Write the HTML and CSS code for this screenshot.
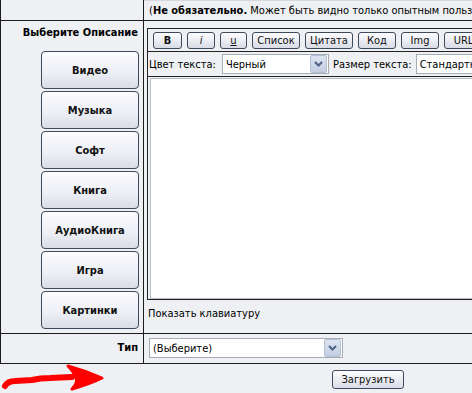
FILE: index.html
```html
<!DOCTYPE html>
<html lang="ru">

<head>
    <meta charset="UTF-8">
    <title>Загрузка</title>
    <link rel="stylesheet" href="styles.css">
</head>

<body>
    <div class="upload-form">
        <!-- row: note -->
        <div class="cell label-cell note-label"></div>
        <div class="cell field-cell note">(<b>Не обязательно.</b> Может быть видно только опытным пользователям)</div>

        <!-- row: description -->
        <div class="cell label-cell desc-cell">
            <div class="label">Выберите Описание</div>
            <div class="templates">
                <button class="tpl-button">Видео</button>
                <button class="tpl-button">Музыка</button>
                <button class="tpl-button">Софт</button>
                <button class="tpl-button">Книга</button>
                <button class="tpl-button">АудиоКнига</button>
                <button class="tpl-button">Игра</button>
                <button class="tpl-button">Картинки</button>
            </div>
        </div>
        <div class="cell field-cell editor-cell">
            <div class="editor">
                <div class="toolbar">
                    <button class="tb-button b">B</button>
                    <button class="tb-button i">i</button>
                    <button class="tb-button u">u</button>
                    <button class="tb-button w49">Список</button>
                    <button class="tb-button w48">Цитата</button>
                    <button class="tb-button w38">Код</button>
                    <button class="tb-button w38">Img</button>
                    <button class="tb-button w39">URL</button>
                </div>
                <div class="format-row">
                    <span>Цвет текста:</span>
                    <div class="select color-select"><span class="select-text">Черный</span><span class="select-arrow"><svg width="9" height="6" viewBox="0 0 9 6"><path d="M1 1 L4.5 4.5 L8 1" fill="none" stroke="#4d6185" stroke-width="2"/></svg></span></div>
                    <span>Размер текста:</span>
                    <div class="select size-select"><span class="select-text">Стандартный</span><span class="select-arrow"><svg width="9" height="6" viewBox="0 0 9 6"><path d="M1 1 L4.5 4.5 L8 1" fill="none" stroke="#4d6185" stroke-width="2"/></svg></span></div>
                </div>
                <div class="text-area"></div>
            </div>
            <div class="keyboard-link">Показать клавиатуру</div>
        </div>

        <!-- row: type -->
        <div class="cell label-cell type-cell"><div class="label">Тип</div></div>
        <div class="cell field-cell type-field">
            <div class="select type-select"><span class="select-text">(Выберите)</span><span class="select-arrow"><svg width="9" height="6" viewBox="0 0 9 6"><path d="M1 1 L4.5 4.5 L8 1" fill="none" stroke="#4d6185" stroke-width="2"/></svg></span></div>
        </div>

        <!-- row: submit -->
        <div class="bottom-left">
            <svg class="arrow" width="110" height="29" viewBox="0 0 110 29">
                <path d="M5 22 Q8 17 15 17 L32 16 Q40 14 50 14 L72 13" fill="none" stroke="#f00" stroke-width="6" stroke-linecap="round" stroke-linejoin="round"/>
                <path d="M68 2 Q86 7 102 14 Q90 20 72 25 Q78 19 76 14 Q74 8 68 2 Z" fill="#f00" stroke="#f00" stroke-width="3" stroke-linejoin="round"/>
            </svg>
        </div>
        <div class="bottom-right">
            <button class="submit-button">Загрузить</button>
        </div>
    </div>
</body>

</html>
```

FILE: styles.css
```css
body {
    margin: 0;
    background-color: #eef0f3;
    font-family: "DejaVu Sans Condensed", Tahoma, "DejaVu Sans", sans-serif;
    font-size: 11px;
    color: #000;
    overflow: hidden;
}

.upload-form {
    display: grid;
    grid-template-columns: 144px 1fr;
    width: 472px;
    overflow: hidden;
}

.cell {
    border-bottom: 1px solid #1c1c1c;
}

.label-cell {
    border-left: 1px solid #1c1c1c;
    border-right: 1px solid #1c1c1c;
    text-align: right;
}

.label {
    font-weight: bold;
    padding-right: 5px;
    line-height: 14px;
}

.note-label {
    height: 21px;
    box-sizing: border-box;
}

.note {
    height: 21px;
    box-sizing: border-box;
    line-height: 20px;
    padding-left: 5px;
    white-space: nowrap;
    border-top: 1px solid #d6d8dc;
}

/* description */
.desc-cell {
    padding: 5px 0 4px;
}

.templates {
    display: flex;
    flex-direction: column;
    align-items: flex-end;
    gap: 2px;
    margin-top: 11px;
    padding-right: 4px;
}

.tpl-button {
    width: 98px;
    height: 38px;
    border: 1px solid #3d4a5c;
    border-radius: 4px;
    background: linear-gradient(#fdfdff, #eceef4 60%, #d9dce6);
    font-family: inherit;
    font-size: 11px;
    font-weight: bold;
    color: #111;
    padding: 0;
}

.editor-cell {
    padding: 7px 0 0 3px;
    overflow: hidden;
}

.editor {
    width: 520px;
    border-top: 1px solid #222;
    border-left: 1px solid #222;
    border-bottom: 1px solid #222;
}

.toolbar {
    display: flex;
    gap: 5px;
    height: 23px;
    padding: 3px 0 0 5px;
    box-sizing: border-box;
    border-bottom: 1px solid #222;
}

.tb-button {
    height: 17px;
    padding: 0;
    width: 27px;
    border: 1px solid #3d4a5c;
    border-radius: 3px;
    background: linear-gradient(#fdfdff, #d9dce6);
    font-family: inherit;
    font-size: 11px;
    line-height: 14px;
    color: #111;
}

.tb-button.b {
    font-weight: bold;
    width: 29px;
}

.tb-button.i {
    font-style: italic;
    width: 28px;
}

.tb-button.u {
    text-decoration: underline;
}

.tb-button.w49 {
    width: 48px;
}

.tb-button.w48 {
    width: 48px;
}

.tb-button.w38 {
    width: 38px;
}

.tb-button.w39 {
    width: 39px;
}

.format-row {
    display: flex;
    align-items: center;
    gap: 4px;
    height: 24px;
    padding-left: 1px;
    border-bottom: 1px solid #222;
    white-space: nowrap;
}

.select {
    display: flex;
    align-items: center;
    flex-shrink: 0;
    height: 20px;
    box-sizing: border-box;
    border: 1px solid #a5acb5;
    background-color: #fff;
}

.select-text {
    flex: 1;
    padding-left: 3px;
    white-space: nowrap;
}

.select-arrow {
    display: flex;
    align-items: center;
    justify-content: center;
    width: 15px;
    height: 16px;
    margin-right: 1px;
    border: 1px solid #b3bfd4;
    border-radius: 2px;
    background: linear-gradient(#dde4f1, #c4cee0);
}

.color-select {
    margin-left: 2px;
    width: 107px;
}

.size-select {
    width: 120px;
}

.text-area {
    height: 219px;
    margin: 1px 0 0 2px;
    border: 1px solid #b9bcc1;
    background-color: #fff;
}

.keyboard-link {
    margin-top: 7px;
    padding-left: 1px;
    line-height: 14px;
}

/* type */
.type-cell {
    padding-top: 7px;
}

.type-field {
    padding: 4px 0 5px 5px;
}

.type-select {
    width: 194px;
}

/* submit */
.bottom-left {
    padding: 0;
}

.bottom-right {
    padding: 6px 0 0 188px;
}

.submit-button {
    width: 72px;
    height: 19px;
    padding: 0;
    border: 1px solid #3d4a5c;
    border-radius: 3px;
    background: linear-gradient(#fdfdff, #d9dce6);
    font-family: inherit;
    font-size: 11px;
    color: #111;
}
```
